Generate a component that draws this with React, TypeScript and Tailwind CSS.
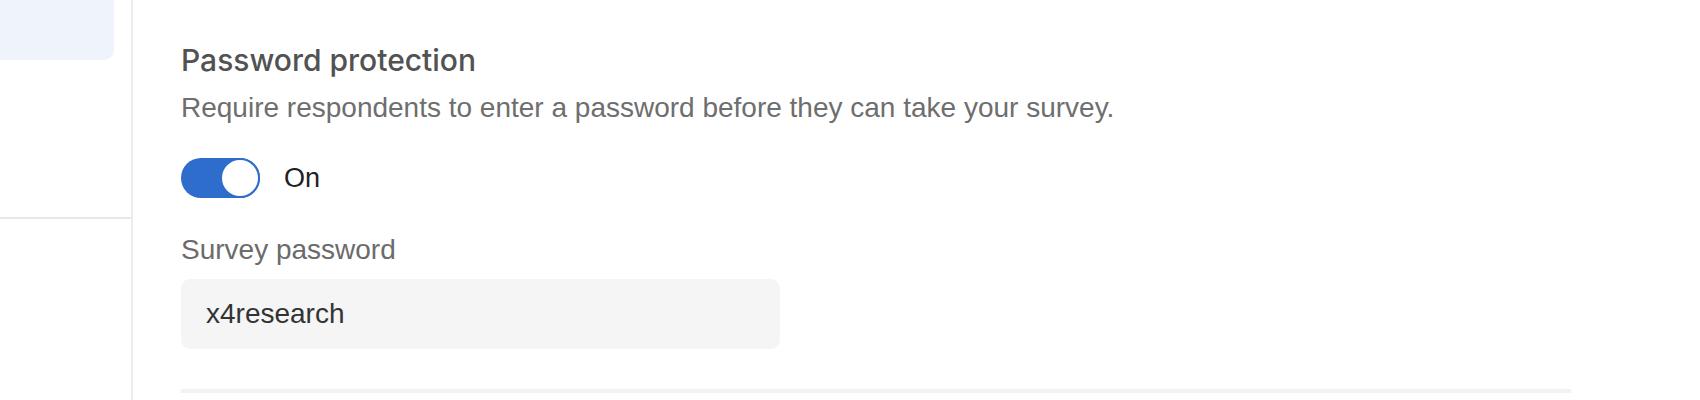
import { useState } from 'react';

const App = () => {
  const [enabled, setEnabled] = useState(true);
  const [password, setPassword] = useState('x4research');

  return (
    <div className="flex h-[400px] w-full bg-white font-['Liberation_Sans',Arial,sans-serif]">
      {/* Left nav column */}
      <div className="w-[133px] shrink-0 border-r-2 border-[#ececec]">
        <div className="h-[60px] w-[114px] rounded-br-[10px] bg-[#eff3fc]" />
        <div className="mt-[157px] h-[2px] w-full bg-[#e8e8e8]" />
      </div>

      {/* Settings content */}
      <div className="flex-1 pl-[48px] pt-[42px]">
        <h2 className="font-['Inter',sans-serif] text-[30px] font-medium leading-[36px] text-[#525252]">
          Password protection
        </h2>
        <p className="mt-[14px] text-[28px] leading-[32px] text-[#6e6e6e]">
          Require respondents to enter a password before they can take your survey.
        </p>

        <div className="mt-[34px] flex items-center gap-[24px]">
          <button
            type="button"
            onClick={() => setEnabled(!enabled)}
            className={`flex h-[40px] w-[79px] items-center rounded-full ${
              enabled ? 'justify-end bg-[#2f6dcc]' : 'justify-start bg-[#c7c7c7]'
            }`}
          >
            <span
              className={`h-[40px] w-[40px] rounded-full border-2 bg-white ${
                enabled ? 'border-[#2f6dcc]' : 'border-[#c7c7c7]'
              }`}
            />
          </button>
          <span className="text-[27px] leading-[32px] text-[#222222]">{enabled ? 'On' : 'Off'}</span>
        </div>

        <label className="mt-[36px] block text-[28px] leading-[32px] text-[#6b6b6b]">Survey password</label>
        <div className="mt-[13px] flex h-[70px] w-[599px] items-center rounded-[9px] bg-[#f5f5f5] px-[25px]">
          <input
            value={password}
            onChange={(e) => setPassword(e.target.value)}
            className="w-full bg-transparent text-[28px] text-[#333333] outline-none"
          />
        </div>

        <div className="mt-[40px] h-[4px] w-[1390px] bg-[#f2f2f2]" />
      </div>
    </div>
  );
};

export default App;
